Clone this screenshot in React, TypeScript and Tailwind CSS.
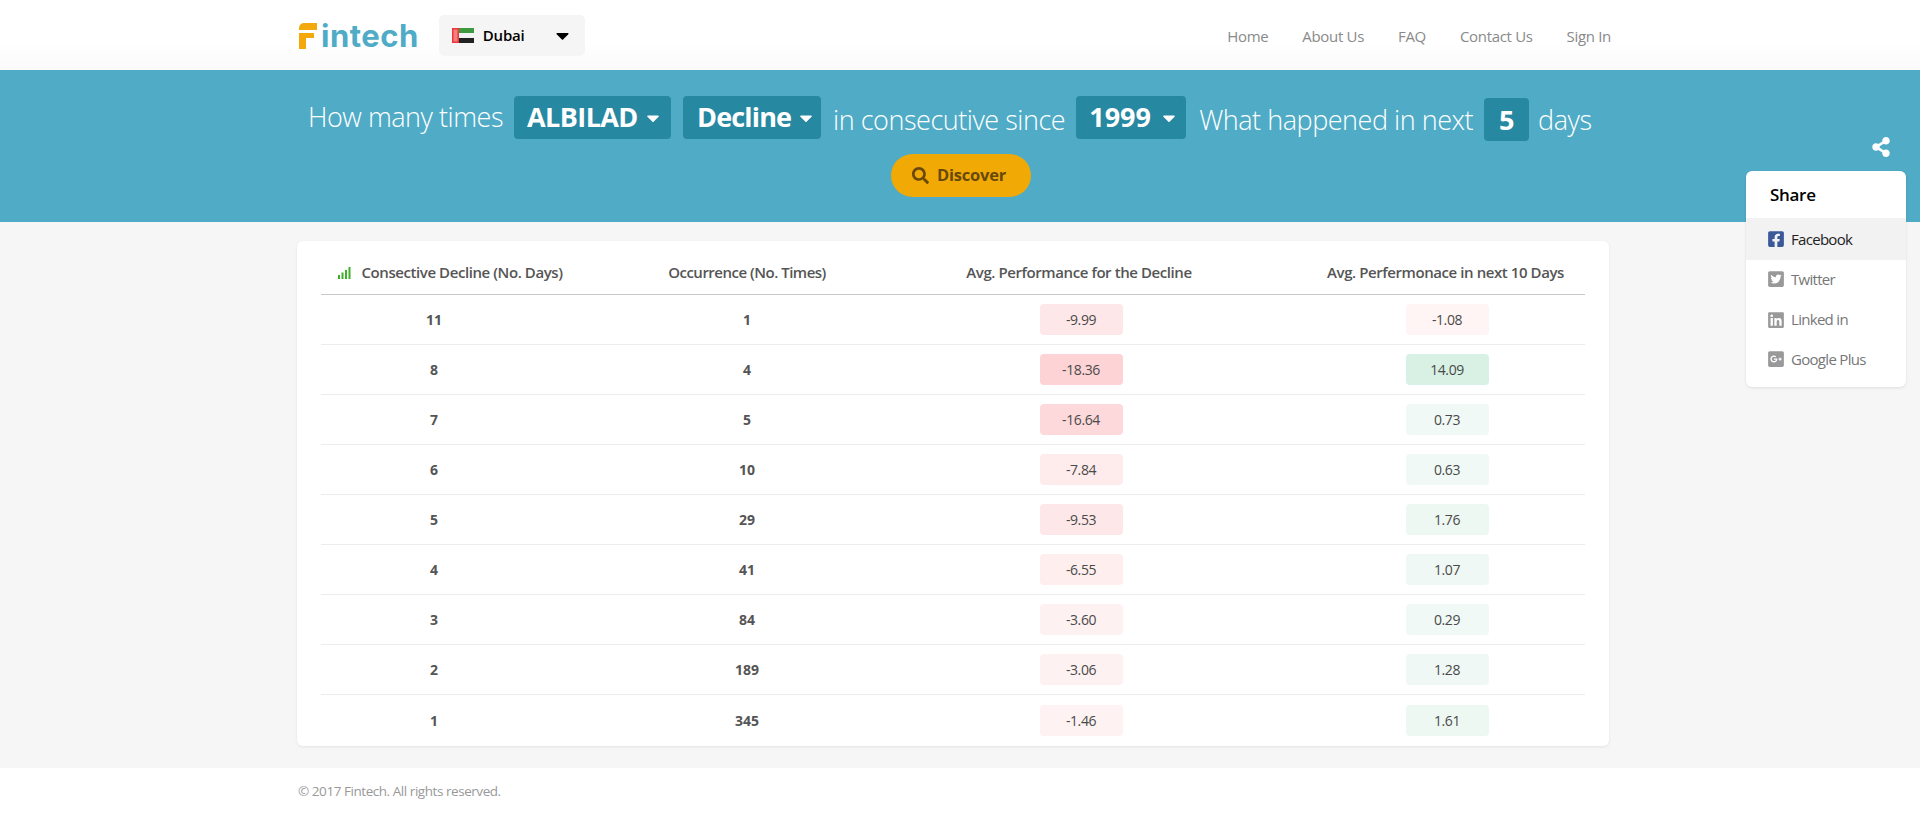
import { FaCaretDown, FaFacebookSquare, FaGooglePlusSquare, FaLinkedin, FaSearch, FaShareAlt, FaTwitterSquare } from "react-icons/fa";

const rows = [
  { days: "11", times: "1", perf: "-9.99", perfBg: "bg-[#fee7e8]", next: "-1.08", nextBg: "bg-[#fff5f4]" },
  { days: "8", times: "4", perf: "-18.36", perfBg: "bg-[#fdd3d5]", next: "14.09", nextBg: "bg-[#d8f1e4]" },
  { days: "7", times: "5", perf: "-16.64", perfBg: "bg-[#fdd9db]", next: "0.73", nextBg: "bg-[#f0f9f5]" },
  { days: "6", times: "10", perf: "-7.84", perfBg: "bg-[#feecec]", next: "0.63", nextBg: "bg-[#f0f9f5]" },
  { days: "5", times: "29", perf: "-9.53", perfBg: "bg-[#fee7e8]", next: "1.76", nextBg: "bg-[#eef8f3]" },
  { days: "4", times: "41", perf: "-6.55", perfBg: "bg-[#feeeee]", next: "1.07", nextBg: "bg-[#eff8f4]" },
  { days: "3", times: "84", perf: "-3.60", perfBg: "bg-[#fef1f1]", next: "0.29", nextBg: "bg-[#f0f9f5]" },
  { days: "2", times: "189", perf: "-3.06", perfBg: "bg-[#fef1f1]", next: "1.28", nextBg: "bg-[#eff8f4]" },
  { days: "1", times: "345", perf: "-1.46", perfBg: "bg-[#fef2f2]", next: "1.61", nextBg: "bg-[#eef8f3]" },
];

const nav = ["Home", "About Us", "FAQ", "Contact Us", "Sign In"];

function Select(props: { label: string; className: string }) {
  return (
    <div className={`flex h-[43px] items-center rounded-[4px] bg-[#2788a2] font-bold text-white ${props.className}`}>
      <span className="-mt-[2px]">{props.label}</span>
      <FaCaretDown className="ml-auto text-[20px]" />
    </div>
  );
}

function Flag() {
  return (
    <svg width="22" height="15" viewBox="0 0 22 15" className="shrink-0">
      <rect width="22" height="5" fill="#3f9a3f" />
      <rect y="5" width="22" height="5" fill="#f4f4f4" />
      <rect y="10" width="22" height="5" fill="#222" />
      <rect width="7" height="15" fill="#f0353a" />
      <rect x="1.5" y="1.5" width="4" height="12" fill="#f47f80" />
    </svg>
  );
}

function SignalIcon() {
  return (
    <svg width="13" height="12" viewBox="0 0 13 12" className="shrink-0">
      <rect x="0" y="8" width="2" height="4" fill="#3fae2a" />
      <rect x="3.5" y="5.5" width="2" height="6.5" fill="#3fae2a" />
      <rect x="7" y="3" width="2" height="9" fill="#3fae2a" />
      <rect x="10.5" y="0" width="2" height="12" fill="#3fae2a" />
    </svg>
  );
}

export default function App() {
  return (
    <div className="relative min-h-[813px] bg-[#f6f6f6] font-['Open_Sans',sans-serif] text-[#555]">
      {/* top bar */}
      <header className="flex h-[70px] items-start bg-gradient-to-b from-white from-60% to-[#fafafa] pl-[299px]">
        <div className="mt-[23px] flex items-start">
          <div className="flex flex-col gap-[3px]">
            <div className="h-[7px] w-[18px] rounded-tl-[5px] bg-[#f3a80c]" />
            <div className="h-[5px] w-[15px] bg-[#f3a80c]" />
            <div className="-mt-[3px] h-[11px] w-[7px] bg-[#f3a80c]" />
          </div>
          <span className="-mt-[10px] ml-[4px] font-['Inter',sans-serif] text-[31px] font-bold tracking-[0.5px] text-[#4fabc6]">
            intech
          </span>
        </div>
        <div className="ml-[20px] mt-[15px] flex h-[41px] w-[146px] items-center rounded-[5px] bg-[#f5f5f5] pl-[13px] pr-[12px] text-black">
          <Flag />
          <span className="ml-[9px] text-[15px] font-semibold tracking-[-0.2px]">Dubai</span>
          <FaCaretDown className="ml-auto text-[21px]" />
        </div>
        <nav className="ml-auto mr-[309px] mt-[25px] flex gap-[34px] text-[15px] tracking-[-0.32px] text-[#8a8a8a]">
          {nav.map((item) => (
            <a key={item}>{item}</a>
          ))}
        </nav>
      </header>

      {/* query sentence */}
      <section className="h-[152px] bg-[#4fabc6] pt-[26px] text-white">
        <div className="flex items-start pl-[308px] text-[27px] font-[350] leading-[43px] tracking-[-0.47px]">
          <span className="-mt-[1px]">How many times</span>
          <Select label="ALBILAD" className="ml-[11px] w-[157px] pl-[13px] pr-[8px] tracking-[-0.6px]" />
          <Select label="Decline" className="ml-[12px] w-[138px] pl-[14px] pr-[5px] tracking-[-0.85px]" />
          <span className="ml-[12px] mt-[2px]">in consecutive since</span>
          <Select label="1999" className="ml-[11px] w-[110px] pl-[13px] pr-[7px] tracking-[0px]" />
          <span className="ml-[13px] mt-[2px]">What happened in next</span>
          <div className="ml-[11px] mt-[2px] flex h-[43px] w-[45px] items-center justify-center rounded-[4px] bg-[#2788a2] font-bold">5</div>
          <span className="ml-[9px] mt-[2px]">days</span>
        </div>
        <button className="ml-[891px] mt-[13px] flex h-[43px] w-[140px] items-center justify-center gap-[8px] rounded-full bg-[#f0a905] pr-[4px] text-[16.5px] font-bold tracking-[-0.2px] text-[#69490a]">
          <FaSearch className="text-[17px]" />
          Discover
        </button>
      </section>

      {/* results */}
      <main className="pb-[22px] pl-[297px] pt-[19px]">
        <div className="w-[1312px] rounded-[6px] bg-white px-[24px] pb-[1px] shadow-[0_1px_3px_rgba(0,0,0,0.08)]">
          <div className="grid h-[54px] grid-cols-[226px_400px_268px_1fr] items-center border-b border-[#c8c8c8] pt-[10px] text-center text-[15px] font-semibold tracking-[-0.42px]">
            <div className="flex items-center justify-center gap-[10px] pl-[33px] whitespace-nowrap">
              <SignalIcon />
              Consective Decline (No. Days)
            </div>
            <div className="tracking-[-0.5px]">Occurrence (No. Times)</div>
            <div className="pr-[4px]">Avg. Performance for the Decline</div>
            <div className="pl-[91px] whitespace-nowrap">Avg. Perfermonace in next 10 Days</div>
          </div>
          {rows.map((row, i) => (
            <div
              key={row.days}
              className={`grid h-[50px] grid-cols-[226px_400px_268px_1fr] items-center text-center text-[14px] ${
                i < rows.length - 1 ? "border-b border-[#ececec]" : ""
              }`}
            >
              <div className="font-bold">{row.days}</div>
              <div className="font-bold">{row.times}</div>
              <div className="flex justify-center">
                <span className={`flex h-[31px] w-[83px] items-center justify-center rounded-[4px] tracking-[-0.4px] text-[#4a4a4a] ${row.perfBg}`}>{row.perf}</span>
              </div>
              <div className="flex justify-center pl-[94px]">
                <span className={`flex h-[31px] w-[83px] items-center justify-center rounded-[4px] tracking-[-0.4px] text-[#4a4a4a] ${row.nextBg}`}>{row.next}</span>
              </div>
            </div>
          ))}
        </div>
      </main>

      <footer className="flex h-[45px] items-center bg-white pl-[298px] pt-[1px] text-[13.5px] tracking-[-0.45px] text-[#999]">
        © 2017 Fintech. All rights reserved.
      </footer>

      {/* share widget sits over the hero */}
      <FaShareAlt className="absolute left-[1871px] top-[137px] text-[20px] text-white" />
      <div className="absolute left-[1746px] top-[171px] h-[216px] w-[160px] rounded-[6px] bg-white shadow-[0_1px_3px_rgba(0,0,0,0.1)]">
        <div className="flex h-[47px] items-center pl-[24px] text-[17px] font-semibold tracking-[-0.3px] text-black">Share</div>
        <div className="flex h-[42px] items-center gap-[6px] bg-[#f2f2f2] pl-[21px] text-[15px] tracking-[-0.7px] text-[#222]">
          <FaFacebookSquare className="text-[18px] text-[#3b5998]" />
          Facebook
        </div>
        <div className="flex h-[40px] items-center gap-[6px] pb-[2px] pl-[21px] text-[15px] tracking-[-0.7px] text-[#777]">
          <FaTwitterSquare className="text-[18px] text-[#999]" />
          Twitter
        </div>
        <div className="flex h-[40px] items-center gap-[6px] pb-[1px] pl-[21px] text-[15px] tracking-[-0.7px] text-[#777]">
          <FaLinkedin className="text-[18px] text-[#999]" />
          Linked in
        </div>
        <div className="flex h-[40px] items-center gap-[6px] pb-[2px] pl-[21px] text-[15px] tracking-[-0.7px] text-[#777]">
          <FaGooglePlusSquare className="text-[18px] text-[#999]" />
          Google Plus
        </div>
      </div>
    </div>
  );
}
